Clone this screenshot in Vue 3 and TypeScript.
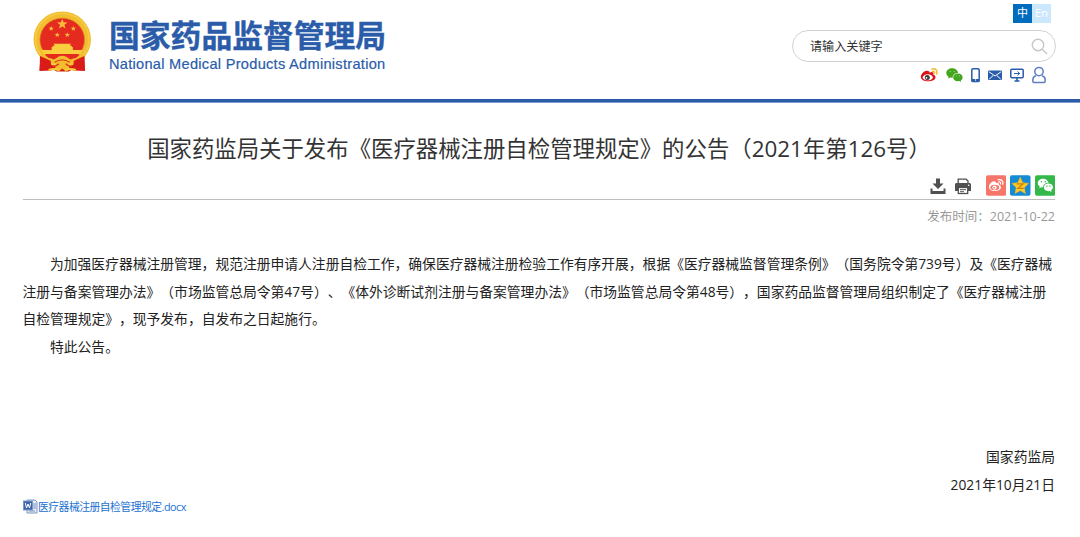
<template>
  <div class="page">
    <header class="header">
      <div class="brand">
        <svg class="emblem" viewBox="0.5 0 58.5 62.5" preserveAspectRatio="none">
          <path d="M8 44 L7 61 L17 58 L24 62 H36 L43 58 L52 61 L51 44Z" fill="#d31a15" />
          <circle cx="29.5" cy="29" r="28.5" fill="#f2bd2e" />
          <circle cx="29.5" cy="29" r="26.5" fill="none" stroke="#f6cb45" stroke-width="1.6" />
          <circle cx="29.5" cy="29.5" r="22.2" fill="#e52a20" stroke="#d69a1d" stroke-width="0.7" />
          <polygon v-for="(star, i) in stars" :key="i" :points="starPoints(star)" fill="#f9b93d" />
          <path
            d="M20 37 v-1.500 h2 l-1-2 h17 l-1 2 h2 v1.500 h1 v3 h9.500 l-2 4 H11 l-2-4 h10 v-3z"
            fill="#f9cf3d"
          />
          <path d="M12 44.500h35l-4 4H16z" fill="#e52a20" />
          <path
            d="M8 44c4 2 9 5 13 6l5-3.500q3.500-1.500 7 0l5 3.500c5-1 9-4 13-6l1 5c-4 3-8 5-12 5l-5-1 2 7-4 2-3.500-3-3.500 3-4-2 2-7-5 1c-4 0-8-2-12-5z"
            fill="#f3bd2d"
          />
          <path d="M7.500 46l10.500 5 1 10-12 .5zM51.500 46l-10.500 5-1 10 12 .5z" fill="#d91c17" />
          <path d="M22 52.500q7.500-5 15 0" fill="none" stroke="#e0431a" stroke-width="1.300" />
          <path d="M20 57q4-.5 6-3M39 57q-4-.5-6-3" fill="none" stroke="#e03a1a" stroke-width="1.500" />
          <path d="M16 60.500q6-2 10 0M33 60.500q4-2 10 0" fill="none" stroke="#f7ca38" stroke-width="2" />
        </svg>
        <div class="brand-text">
          <div class="brand-cn">国家药品监督管理局</div>
          <div class="brand-en">National Medical Products Administration</div>
        </div>
      </div>

      <div class="tools">
        <div class="langs">
          <span class="lang active">中</span>
          <span class="lang">En</span>
        </div>
        <div class="search">
          <span>请输入关键字</span>
          <svg class="search-icon" viewBox="0 0 17 17">
            <circle cx="7" cy="7" r="5.700" />
            <path d="M11.200 11.200 L16 16" />
          </svg>
        </div>
        <div class="links">
          <svg width="18" height="16" viewBox="0 0 18 16">
            <path
              d="M8 4C5.500 2.500.8 6.500.8 9.800c0 6.200 14.700 5.700 14.700.4 0-1.500-1-2.300-2.200-2.700.6-2.600-1-3.100-3.800-1.800.3-.9-.3-1.400-1.500-1.700z"
              fill="#df1116"
            />
            <ellipse cx="7.800" cy="10.300" rx="5" ry="3" fill="#fff" />
            <circle cx="7.300" cy="10.400" r="2.500" fill="#453838" />
            <circle cx="6.500" cy="10.800" r=".9" fill="#fff" />
            <path
              d="M12 1.900c3.700-.8 5.600 1.600 4.700 5M12.500 4.400c1.600-.2 2.300.6 2 1.900"
              fill="none"
              stroke="#f7b730"
              stroke-width="1.500"
              stroke-linecap="round"
            />
          </svg>
          <svg width="17" height="16" viewBox="0 0 17 16">
            <path
              d="M6.300 1.300C2.900 1.300.3 3.300.3 6c0 1.600.9 2.900 2.300 3.700L2.200 11.500l2.100-1.100 2.200.3c.2-3 2.400-4.800 5.700-4.900-.6-2.700-3-4.500-5.900-4.500z"
              fill="#42a51c"
            />
            <path
              d="M11.900 6.500c-2.700 0-4.700 1.700-4.700 3.900s2 3.900 4.700 3.900l1.500-.2 1.700.9-.4-1.600c1.200-.7 1.900-1.800 1.900-3 0-2.200-2-3.900-4.700-3.900z"
              fill="#42a51c"
            />
            <path d="M4.300 3.900v1.200M8.300 3.900v1.200M10.300 8.500v1M13.500 8.500v1" stroke="#9fd488" />
          </svg>
          <svg width="9" height="16" viewBox="0 0 9 16">
            <rect x=".8" y="1.800" width="7.400" height="12.800" rx="1.200" fill="none" stroke="#2a5caa" stroke-width="1.500" />
            <path d="M1 13h7" stroke="#2a5caa" stroke-width="2" />
            <circle cx="4.500" cy="13" r=".7" fill="#fff" />
          </svg>
          <svg width="14" height="16" viewBox="0 0 14 16">
            <rect y="3.500" width="14" height="9.500" rx="1" fill="#2a5caa" />
            <path d="M1 4.800l6 4.200 6-4.200M1.300 12l3.900-3.500M12.700 12L8.800 8.500" fill="none" stroke="#fff" />
          </svg>
          <svg width="14" height="16" viewBox="0 0 14 16">
            <rect x=".8" y="2.200" width="12.400" height="8.600" rx="1" fill="none" stroke="#2a5caa" stroke-width="1.500" />
            <path d="M4 6.500h5.500M7.500 4.500l2.200 2-2.200 2" fill="none" stroke="#2a5caa" />
            <path d="M7 11v3M4.500 14h5" stroke="#2a5caa" stroke-width="1.600" />
          </svg>
          <svg width="14" height="18" viewBox="0 0 14 18">
            <g fill="none" stroke="#5f7fc0" stroke-width="1.500">
              <circle cx="7" cy="5.600" r="4.200" />
              <path
                d="M3.900 9.700C1.700 10.400.8 12.100.8 14v1q0 1.500 1.300 1.500h9.800q1.300 0 1.300-1.500v-1c0-1.900-.9-3.600-3.100-4.300"
              />
            </g>
          </svg>
        </div>
      </div>
    </header>

    <main class="article">
      <h1 class="title">国家药监局关于发布《医疗器械注册自检管理规定》的公告（2021年第126号）</h1>

      <div class="actions">
        <svg class="download" width="16" height="18" viewBox="0 0 16 18">
          <path d="M6 1.500h4v5h3.500L8 12 2.500 6.500H6z" fill="#505050" />
          <path d="M.5 11.500h2v2.500h11v-2.500h2V17H.5z" fill="#505050" />
        </svg>
        <svg class="print" width="18" height="18" viewBox="0 0 18 18">
          <path d="M4.200 6V2.200h8l1.800 1.800V6" fill="#fff" stroke="#505050" stroke-width="1.300" />
          <path d="M2.300 6h13.400q1.300 0 1.300 1.500V14h-3v-3H4v3H1V7.500Q1 6 2.300 6z" fill="#505050" />
          <rect x="4.300" y="10.500" width="9.400" height="6" fill="#fff" stroke="#505050" stroke-width="1.300" />
          <path d="M6 12.700h6M6 14.700h4" stroke="#505050" />
          <circle cx="14.700" cy="8.200" r=".8" fill="#fff" />
        </svg>
        <svg class="share" viewBox="0 0 21 21">
          <rect width="21" height="21" rx="2" fill="#f6766a" />
          <path
            d="M9.500 6.700C7 4.900 3 9 3 12.300c0 5 12.300 5 12.300.2 0-1.500-1-2.200-2.100-2.500.5-2-.7-2.600-2.900-1.700.3-.8 0-1.300-.8-1.600z"
            fill="#fff"
          />
          <ellipse cx="9" cy="12.600" rx="4.500" ry="2.800" fill="#f6766a" />
          <circle cx="8.700" cy="12.600" r="2.200" fill="#fff" />
          <circle cx="8.300" cy="12.900" r=".9" fill="#f6766a" />
          <path
            d="M12.500 4.500c3.500-.7 5.500 1.700 4.700 4.700M13 6.800c1.600-.2 2.200.7 1.900 2"
            fill="none"
            stroke="#fff"
            stroke-width="1.300"
            stroke-linecap="round"
          />
        </svg>
        <svg class="share" viewBox="0 0 21 21">
          <rect width="21" height="21" rx="2" fill="#168bd5" />
          <path
            d="M10.500 2l2.500 5.700 6 .7-4.400 4.200 1.200 6.100-5.300-3-5.300 3 1.200-6.100L2 8.400l6-.7z"
            fill="#ffc928"
            stroke="#fbb51e"
            stroke-width=".6"
          />
          <path d="M7 8.800h6.500l-5.300 4.600h6" fill="none" stroke="#cb8209" stroke-width="1.300" />
        </svg>
        <svg class="share" viewBox="0 0 21 21">
          <rect width="21" height="21" rx="2" fill="#34b84a" />
          <path
            d="M8.500 3.500C5.200 3.500 2.800 5.500 2.800 8c0 1.500.8 2.700 2.100 3.500l-.5 1.800 2.200-1.100 1.600.2c.2-3 2.400-4.600 5.700-4.600-.5-2.500-2.700-4.300-5.400-4.300z"
            fill="#fff"
          />
          <path
            d="M13.700 8.500c-2.700 0-4.700 1.700-4.700 3.900s2 3.900 4.700 3.900l1.300-.2 2 1-.5-1.700c1.200-.7 1.900-1.800 1.900-3 0-2.200-2-3.900-4.700-3.900z"
            fill="#fff"
          />
          <g fill="#34b84a">
            <circle cx="6.600" cy="6.700" r=".8" />
            <circle cx="10.400" cy="6.700" r=".8" />
            <circle cx="12.200" cy="11.300" r=".7" />
            <circle cx="15.300" cy="11.300" r=".7" />
          </g>
        </svg>
      </div>

      <div class="date">发布时间：2021-10-22</div>

      <div class="content">
        <div
          v-for="line in lines"
          :key="line.text"
          :class="['line', { indent: line.indent }]"
        >
          {{ line.text }}
        </div>
      </div>

      <div class="signature">
        <div>国家药监局</div>
        <div>2021年10月21日</div>
      </div>

      <a class="attachment">
        <svg width="15" height="15" viewBox="0 0 15 15">
          <path d="M4 1h8l2 2v11H4z" fill="#e8eef9" stroke="#8196bd" />
          <path d="M10 5h3M10 7h3M10 9h3M6 12h6" stroke="#7890bd" />
          <rect x=".5" y="2" width="9" height="9" fill="#3c62a7" stroke="#7e99c8" />
          <path d="M2.300 4l1.200 5L5 5l1.500 4 1.200-5" fill="none" stroke="#fff" />
        </svg>
        <span>医疗器械注册自检管理规定.docx</span>
      </a>
    </main>
  </div>
</template>

<script setup lang="ts">
interface Star {
  x: number;
  y: number;
  r: number;
}

interface Line {
  text: string;
  indent?: boolean;
}

const stars: Star[] = [
  { x: 29.5, y: 13.5, r: 5.5 },
  { x: 18.5, y: 18, r: 2.8 },
  { x: 40.5, y: 18, r: 2.8 },
  { x: 24.5, y: 24.5, r: 2.8 },
  { x: 34.5, y: 24.5, r: 2.8 },
];

const starPoints = ({ x, y, r }: Star): string =>
  Array.from({ length: 10 }, (_, i) => {
    const radius = i % 2 ? r * 0.42 : r;
    const angle = (Math.PI / 5) * i - Math.PI / 2;
    return `${x + radius * Math.cos(angle)},${y + radius * Math.sin(angle)}`;
  }).join(" ");

const lines: Line[] = [
  {
    text: "为加强医疗器械注册管理，规范注册申请人注册自检工作，确保医疗器械注册检验工作有序开展，根据《医疗器械监督管理条例》（国务院令第739号）及《医疗器械",
    indent: true,
  },
  {
    text: "注册与备案管理办法》（市场监管总局令第47号）、《体外诊断试剂注册与备案管理办法》（市场监管总局令第48号），国家药品监督管理局组织制定了《医疗器械注册",
  },
  { text: "自检管理规定》，现予发布，自发布之日起施行。" },
  { text: "特此公告。", indent: true },
];
</script>

<style>
body {
  margin: 0;
  background: #fff;
}
</style>

<style scoped>
.page {
  width: 1080px;
  height: 537px;
  overflow: hidden;
  background: #fff;
  color: #222;
  font-family: "Open Sans", "Noto Sans CJK SC", sans-serif;
  text-spacing-trim: space-all;
  white-space: nowrap;
}

.header {
  display: flex;
  justify-content: space-between;
  box-sizing: border-box;
  height: 102px;
  padding: 0 24px 0 33px;
  border-bottom: 3px solid #2a5caa;
  box-shadow: 0 1px #7d9ccc;
}

.brand {
  display: flex;
  padding-top: 11px;
}

.emblem {
  width: 59px;
  height: 61px;
}

.brand-text {
  margin-left: 17px;
  color: #2a5caa;
}

.brand-cn {
  margin-top: 5px;
  font-size: 30.8px;
  font-weight: 700;
  line-height: 38px;
  -webkit-text-stroke: 0.4px #2a5caa;
}

.brand-en {
  font-family: "Liberation Sans", Arial, sans-serif;
  font-size: 14.6px;
  letter-spacing: 0.28px;
  line-height: 20px;
  -webkit-text-stroke: 0.2px #2a5caa;
}

.tools {
  display: flex;
  flex-direction: column;
  align-items: flex-end;
}

.langs {
  display: flex;
  margin: 4px 5px 0 0;
}

.lang {
  width: 19px;
  height: 19px;
  background: #cce8ff;
  color: #fff;
  font-size: 11px;
  line-height: 17px;
  text-align: center;
}

.lang.active {
  background: #006cbe;
}

.search {
  display: flex;
  align-items: center;
  justify-content: space-between;
  box-sizing: border-box;
  width: 264px;
  height: 32px;
  margin-top: 7px;
  padding: 0 7px 0 16px;
  border: 1.5px solid #d2d2d2;
  border-radius: 16px;
  color: #333;
  font-size: 12.1px;
}

.search span {
  padding-left: 1px;
}

.search-icon {
  width: 17px;
  height: 17px;
  fill: none;
  stroke: #c6c6c6;
  stroke-width: 1.4;
}

.links {
  display: flex;
  align-items: center;
  gap: 8px;
  height: 18px;
  margin: 4px 10px 0 0;
}

.article {
  padding: 0 25px 0 23px;
}

.title {
  margin: 30px 0 0;
  color: #333;
  font-size: 22.4px;
  font-weight: 400;
  line-height: 34px;
  text-align: center;
}

.actions {
  display: flex;
  align-items: center;
  justify-content: flex-end;
  height: 23px;
  margin-top: 8px;
  padding-bottom: 2px;
  border-bottom: 1px solid #bdbdbd;
}

.print {
  margin: 0 14px 0 8px;
}

.share {
  width: 20.5px;
  height: 21px;
}

.share + .share {
  margin-left: 4px;
}

.date {
  margin-top: 7px;
  color: #999;
  font-size: 12.5px;
  line-height: 20px;
  text-align: right;
}

.content {
  margin-top: 23px;
  font-size: 13.79px;
  line-height: 27.6px;
}

.content .line {
  margin-left: -0.5px;
}

.indent {
  padding-left: 27.5px;
}

.signature {
  margin-top: 83px;
  font-size: 13.79px;
  line-height: 27.5px;
  text-align: right;
}

.attachment {
  display: flex;
  align-items: center;
  height: 16px;
  color: #2271d1;
  font-size: 10.8px;
  letter-spacing: -0.5px;
}
</style>
